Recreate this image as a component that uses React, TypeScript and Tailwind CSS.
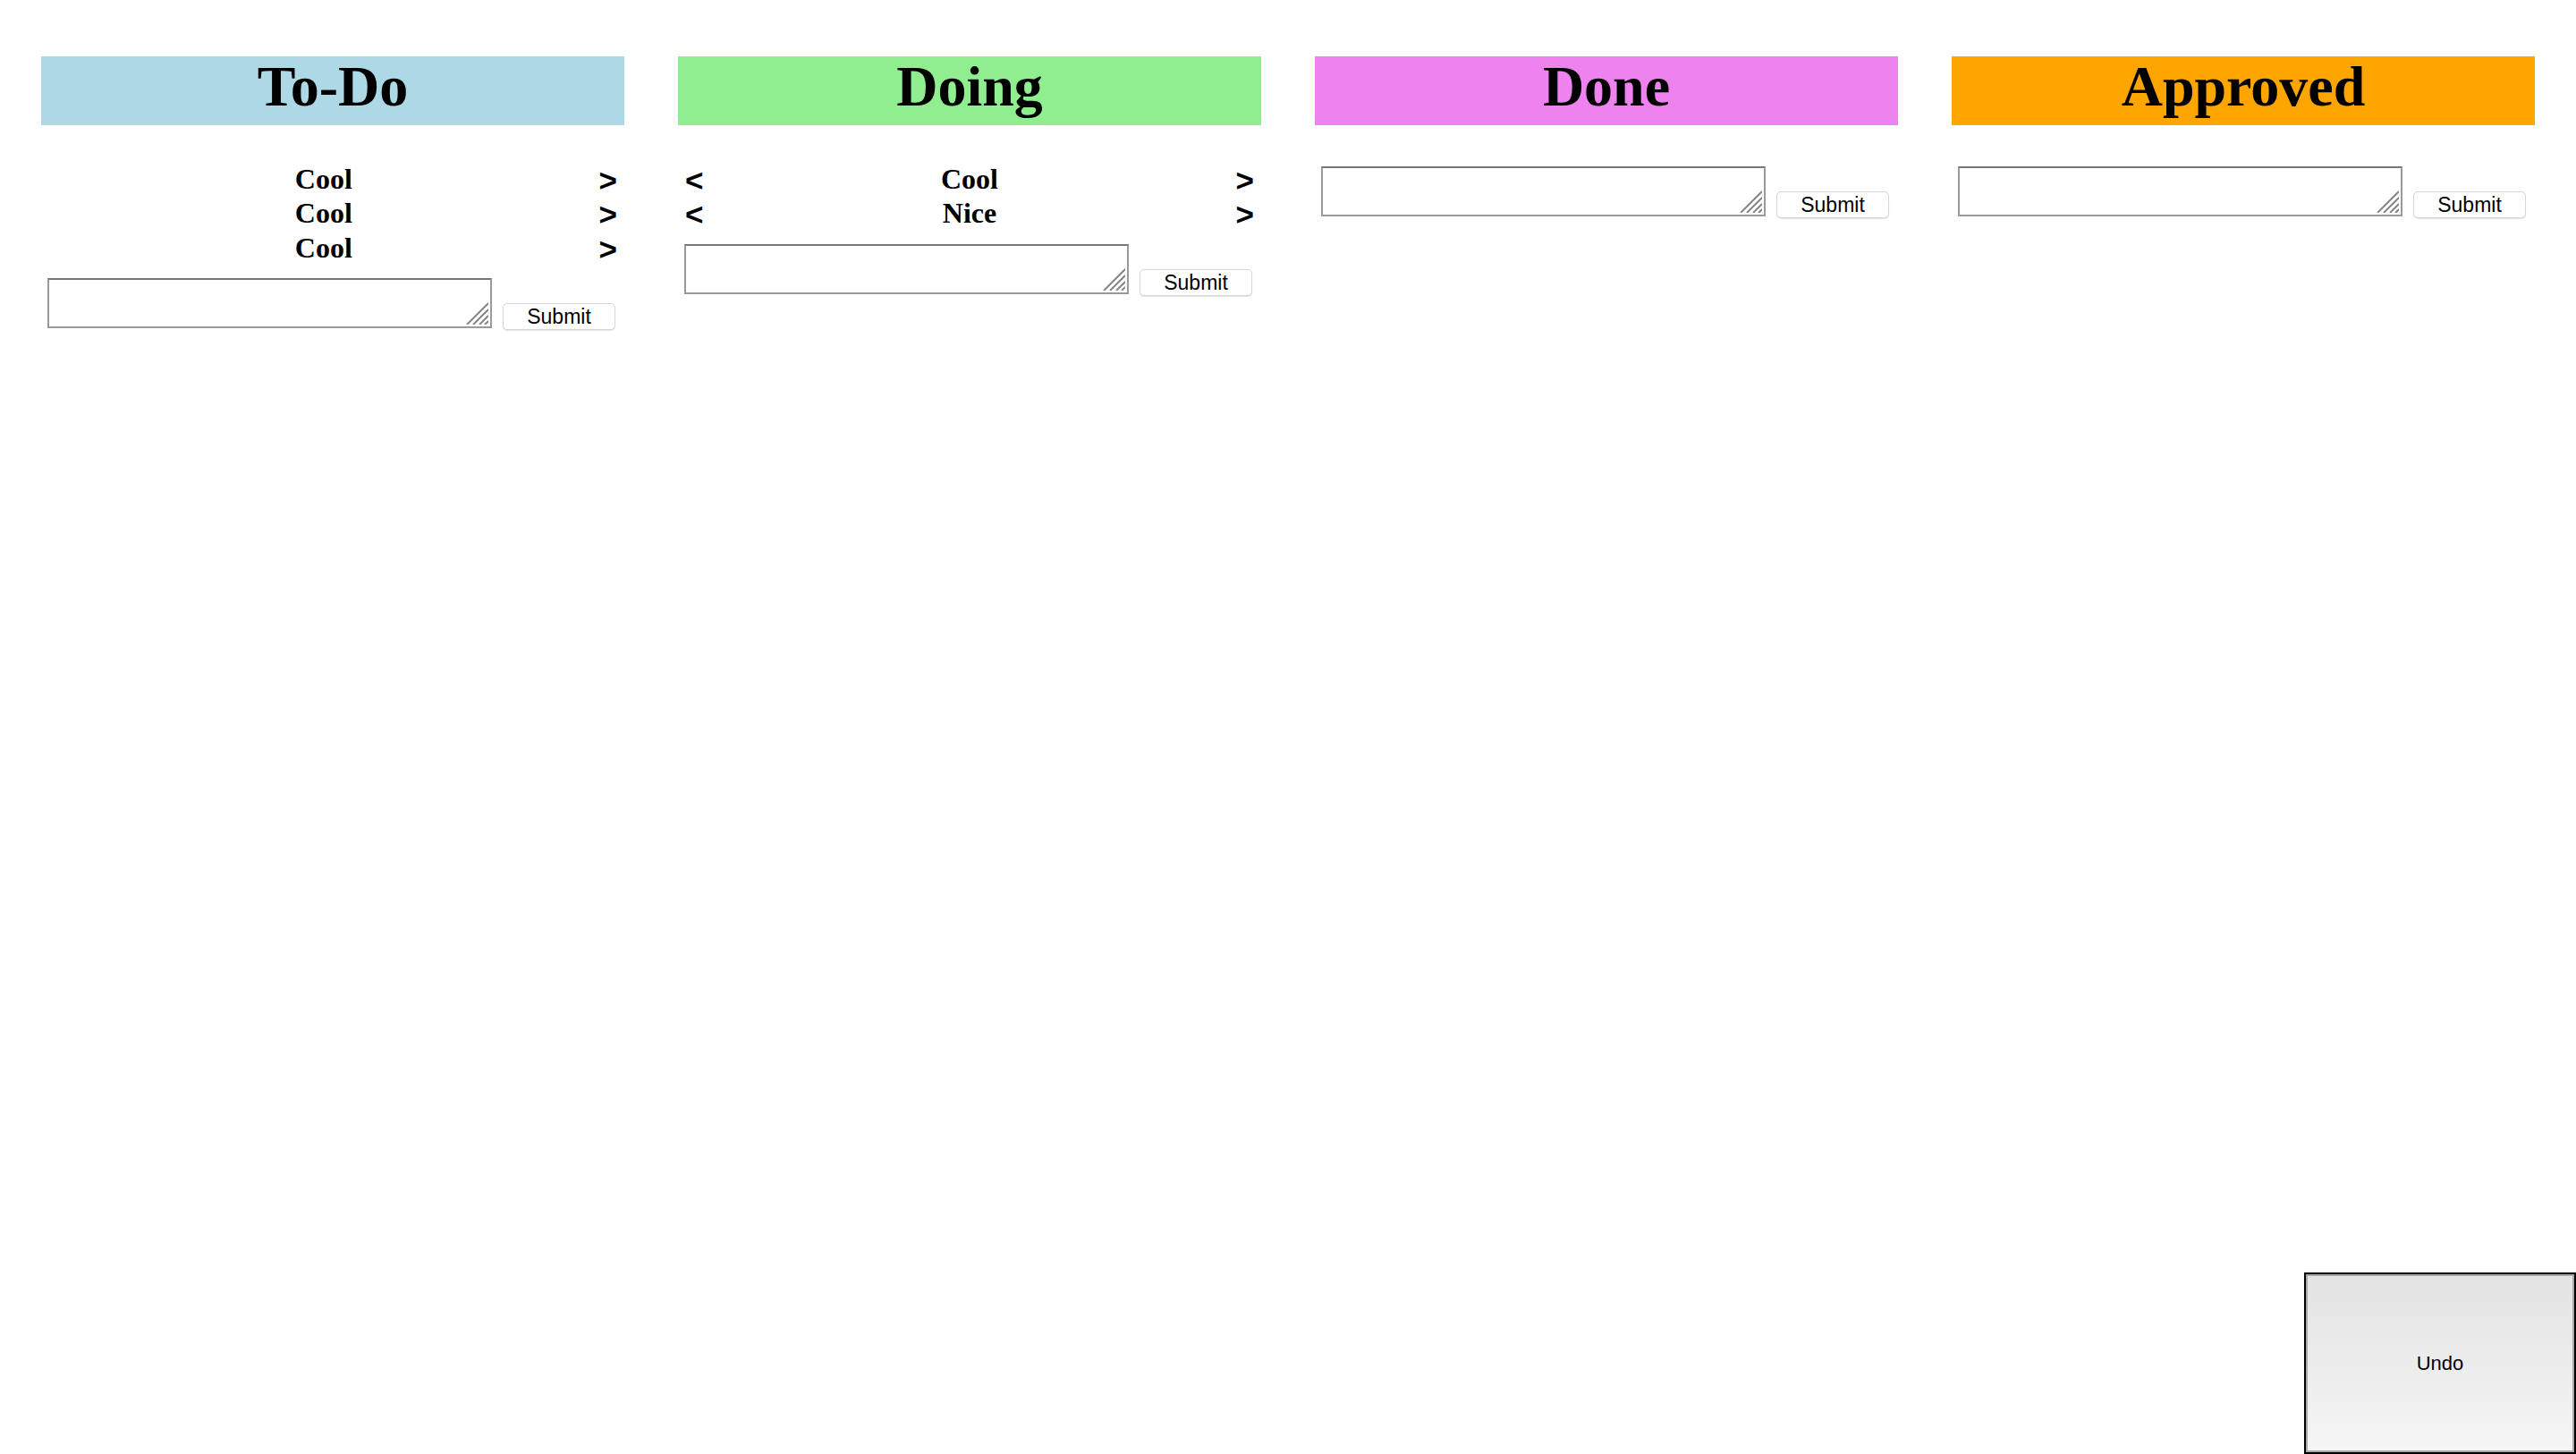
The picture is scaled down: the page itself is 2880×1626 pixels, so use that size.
import React from "react";

type Column = { title: string; bg: string; cards: string[] };

const columns: Column[] = [
  { title: "To-Do", bg: "bg-[#add8e6]", cards: ["Cool", "Cool", "Cool"] },
  { title: "Doing", bg: "bg-[#90ee90]", cards: ["Cool", "Nice"] },
  { title: "Done", bg: "bg-[#ee82ee]", cards: [] },
  { title: "Approved", bg: "bg-[#ffa500]", cards: [] },
];

function ResizeGrip() {
  return (
    <svg
      className="pointer-events-none absolute right-[4px] bottom-[4px]"
      width="25"
      height="25"
      viewBox="0 0 25 25"
    >
      <g stroke="#858585" strokeWidth="2" strokeLinecap="butt">
        <line x1="1" y1="25" x2="25" y2="1" />
        <line x1="8" y1="25" x2="25" y2="8" />
        <line x1="15" y1="25" x2="25" y2="15" />
        <line x1="21" y1="25" x2="25" y2="21" />
      </g>
    </svg>
  );
}

function Arrow({ ch }: { ch: string }) {
  return (
    <button className="translate-y-[2px] cursor-pointer bg-transparent p-0 font-['Liberation_Sans',Arial,sans-serif] text-[35px] leading-[38.33px] font-bold text-black">
      {ch}
    </button>
  );
}

function ColumnView({ col, index }: { col: Column; index: number }) {
  return (
    <div className="flex flex-col">
      <h1
        className={`${col.bg} h-[77px] text-center font-['Liberation_Serif','Times_New_Roman',serif] text-[64px] leading-[67px] font-bold text-black`}
      >
        {col.title}
      </h1>
      <div className="flex flex-col pt-[46px]">
        {col.cards.length > 0 && (
          <div className="mt-[-5px] mb-[15px] flex flex-col">
            {col.cards.map((c, i) => (
              <div
                key={i}
                className="flex h-[38.33px] items-center justify-between px-[8px]"
              >
                {index > 0 ? <Arrow ch="<" /> : <span className="w-0" />}
                <span className="font-['Liberation_Serif','Times_New_Roman',serif] text-[32px] leading-[38.33px] font-bold text-black">
                  {c}
                </span>
                {index < 3 ? <Arrow ch=">" /> : <span className="w-0" />}
              </div>
            ))}
          </div>
        )}
        <div className="flex items-end pl-[7px]">
          <div className="relative h-[56px] w-[497px]">
            <textarea className="block h-[56px] w-[497px] resize-none border-2 border-[#9a9a9a] border-t-[#767676] bg-white outline-none" />
            <ResizeGrip />
          </div>
          <button className="mb-[-2px] ml-[12px] h-[30px] w-[126px] cursor-pointer rounded-[5px] border border-[#d6d6d6] bg-white font-['Liberation_Sans',Arial,sans-serif] text-[23px] leading-[28px] text-black shadow-[0_1px_1px_rgba(0,0,0,0.12)]">
            Submit
          </button>
        </div>
      </div>
    </div>
  );
}

export default function App() {
  return (
    <div className="min-h-screen bg-white">
      <div className="grid grid-cols-4 gap-[60px] px-[46px] pt-[63px]">
        {columns.map((col, i) => (
          <ColumnView key={col.title} col={col} index={i} />
        ))}
      </div>
      <button className="fixed right-0 bottom-0 h-[203px] w-[304px] cursor-pointer border-2 border-black bg-gradient-to-b from-[#e3e3e3] to-[#f5f5f5] font-['Liberation_Sans',Arial,sans-serif] text-[22px] text-black shadow-[inset_0_0_0_2px_#a8a8a8]">
        Undo
      </button>
    </div>
  );
}
